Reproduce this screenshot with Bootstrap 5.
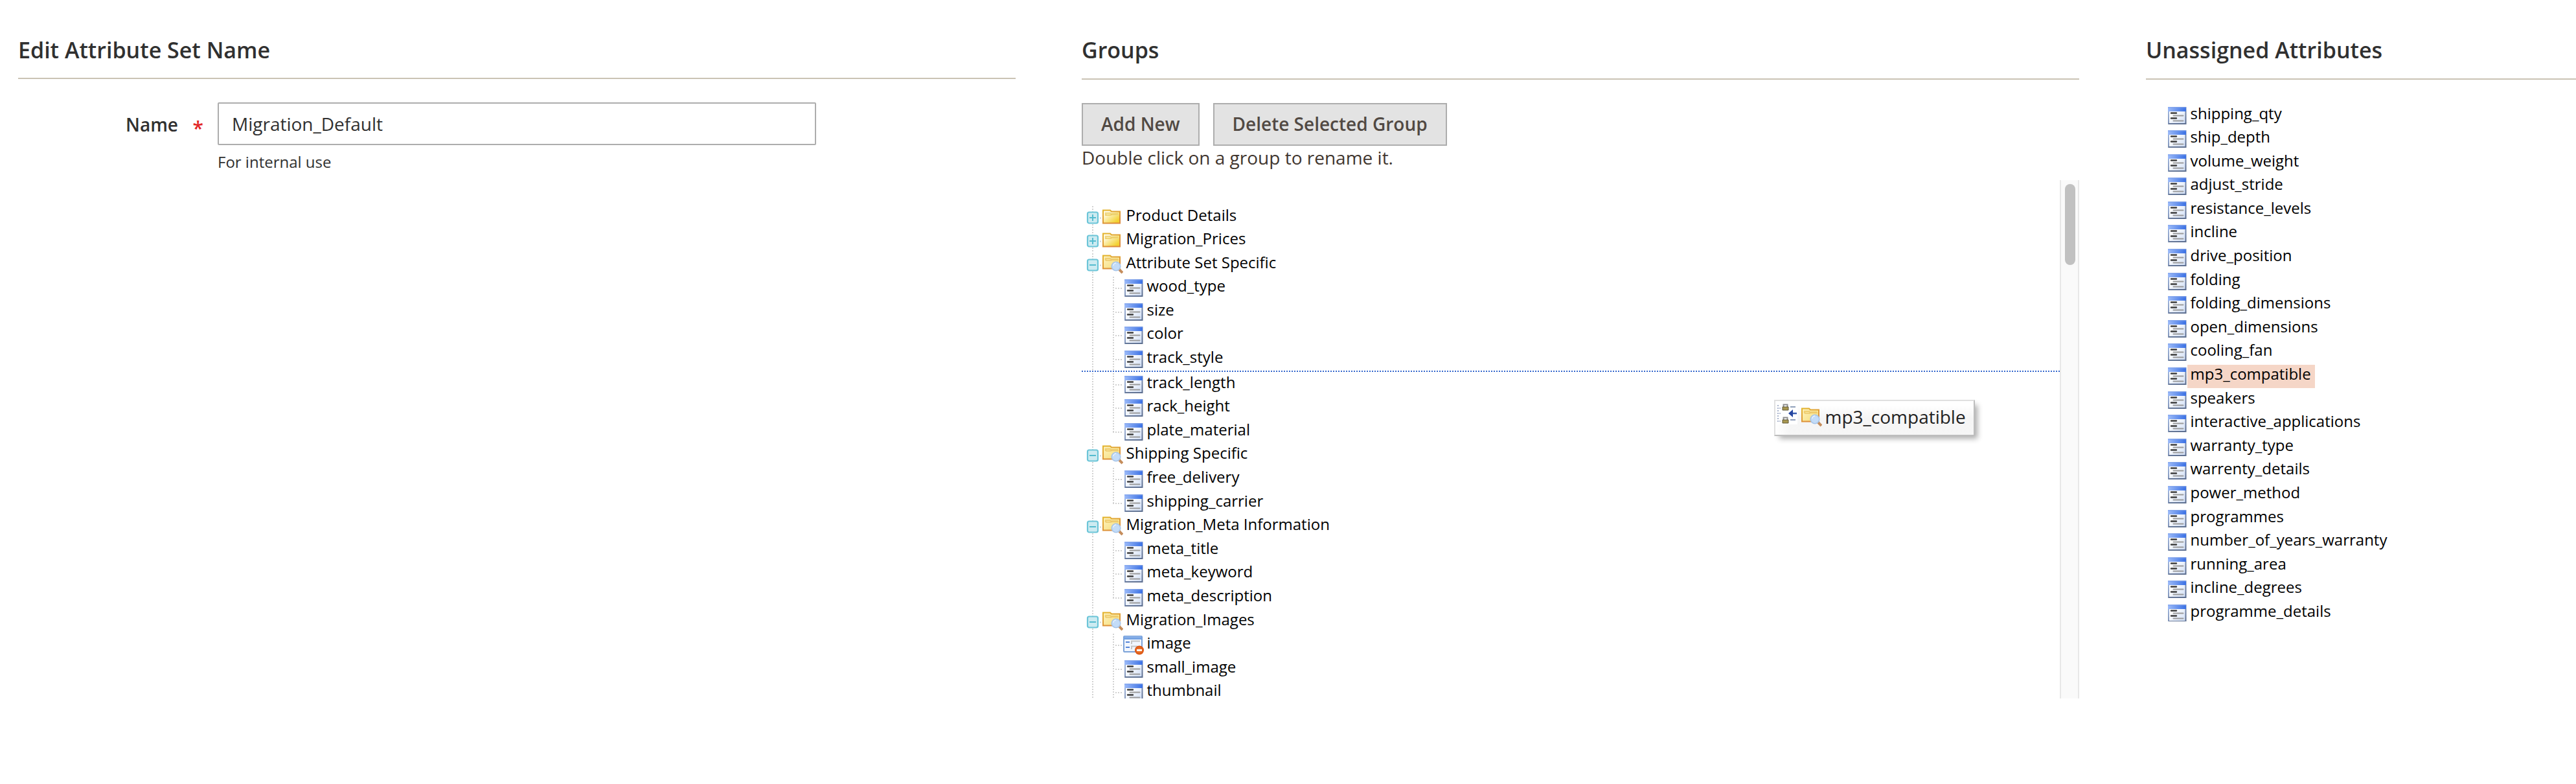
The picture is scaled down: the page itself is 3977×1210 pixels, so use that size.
<!DOCTYPE html>
<html lang="en">
<head>
<meta charset="utf-8">
<title>Edit Attribute Set</title>
<link href="https://cdn.jsdelivr.net/npm/bootstrap@5.3.0/dist/css/bootstrap.min.css" rel="stylesheet">
<style>
body{font-family:"Open Sans","Noto Sans",sans-serif;font-size:28px;line-height:38px;color:#41362f;background:#fff;overflow:hidden}
.page-row{gap:102px;padding-left:28px;height:1210px}
.panel{width:1540px}
.panel-free{flex:1 1 0;min-width:0;margin-left:1px}
.panel-title{font-size:34px;line-height:46px;font-weight:600;color:#303030;padding-top:54px;height:123px;border-bottom:2px solid #cac3b4}
.first .panel-title{height:122px}
.name-row{padding-top:36px;color:#303030}
.name-label{width:308px;font-weight:600;padding:1px 22px 0 0;line-height:66px}
.req{color:#e22626;margin-left:22px;width:17px;display:inline-block;line-height:1;font-size:30px;vertical-align:-6px}
.name-input{width:924px;height:66px;border:2px solid #adadad;border-radius:2px;padding:0 20px;font-size:28px;color:#303030}
.note{font-size:24px;line-height:32px;padding-top:10px}
.btns{padding-top:36px;gap:21px}
.btn-grey{--bs-btn-padding-y:0;--bs-btn-padding-x:28px;--bs-btn-font-size:28px;--bs-btn-font-weight:600;--bs-btn-line-height:60px;--bs-btn-border-radius:0;--bs-btn-border-width:2px;--bs-btn-color:#514943;--bs-btn-bg:#e3e3e3;--bs-btn-border-color:#adadad;height:66px;padding-bottom:2px}
.hint{line-height:36px;height:53px}
.tree-pane{height:800px}
.tree-list{padding-top:39.5px;overflow:hidden;font-size:24px;line-height:32px;color:#000}
.free-list{padding:37.5px 0 0 32px;height:836px}
.tn{height:36.6px}
.ln,.el,.en,.tg{width:32px;height:36px;flex:none}
.ln{background:linear-gradient(#d2d2d2 50%,transparent 50%) 16px 0/2px 4px repeat-y}
.el{background:linear-gradient(#d2d2d2 50%,transparent 50%) 16px 0/2px 4px repeat-y,repeating-linear-gradient(90deg,#d2d2d2 0 2px,transparent 2px 4px) 20px 17px/10px 2px no-repeat}
.en{background:repeating-linear-gradient(#d2d2d2 0 2px,transparent 2px 4px) 16px 0/2px 18px no-repeat,repeating-linear-gradient(90deg,#d2d2d2 0 2px,transparent 2px 4px) 16px 17px/14px 2px no-repeat}
.tg{background:linear-gradient(#d2d2d2 50%,transparent 50%) 16px 0/2px 4px repeat-y}
.tg svg{width:32px;height:36px;display:block}
.ic{width:32px;height:32px;flex:none;margin-top:2px}
.nm{padding:0 6px 0 4.5px;height:36px;line-height:28px;white-space:nowrap}
.picked{background:#f5d6c7}
.drop-below{height:34.6px;margin-bottom:2px;border-bottom:2px dotted #36c;box-sizing:content-box}
.track{width:30px;background:#fafafa;border:solid #e8e8e8;border-width:0 2px;padding:6px 4px 0 6px}
.thumb{width:16px;height:125px;border-radius:8px;background:#c1c1c1}
.ghost{left:2739px;top:617px;width:310px;height:56px;border:2px solid;border-color:#e0e0e0 #bdbdbd #bdbdbd #e0e0e0;background:linear-gradient(90deg,#fff 0,rgba(255,255,255,0) 22px),linear-gradient(#fff 6px,#f5f5f5 26px,#f6f6f6);box-shadow:6px 6px 8px -2px rgba(0,0,0,.32);padding:4px 0 0 2px;color:#222}
.ghost .fold{margin:6px 0 0 6px}
.ghost .cap{padding-left:4.5px;line-height:38px;padding-top:1px}
</style>
<script src="https://cdn.jsdelivr.net/npm/bootstrap@5.3.0/dist/js/bootstrap.bundle.min.js"></script>
</head>
<body>
<svg width="0" height="0" class="position-absolute">
<defs>
<linearGradient id="gBar"><stop offset="0" stop-color="#9dbbf8"/><stop offset="1" stop-color="#3a70e4"/></linearGradient>
<linearGradient id="gBody" x2="1" y2="1"><stop offset=".3" stop-color="#fff"/><stop offset="1" stop-color="#cddcf5"/></linearGradient>
<linearGradient id="gEdge" x2="1" y2="1"><stop offset="0" stop-color="#a9bfe6"/><stop offset="1" stop-color="#5a6b8c"/></linearGradient>
<linearGradient id="gFold" x2="1" y2="1"><stop offset=".2" stop-color="#fffbe6"/><stop offset=".85" stop-color="#f3d12f"/></linearGradient>
<linearGradient id="gRim" x2=".6" y2="1"><stop offset="0" stop-color="#e3b52c"/><stop offset="1" stop-color="#dc8a3c"/></linearGradient>
<linearGradient id="gOpen" x2="1" y2="1"><stop offset="0" stop-color="#fdf3c4"/><stop offset="1" stop-color="#f6dc73"/></linearGradient>
<radialGradient id="gOff"><stop offset="0" stop-color="#f58a3c"/><stop offset="1" stop-color="#d9500f"/></radialGradient>
</defs>
<symbol id="leaf" viewBox="0 0 32 32">
<rect x="3" y="3" width="26.5" height="25" fill="url(#gBody)" stroke="url(#gEdge)" stroke-width="2"/>
<rect x="2" y="2.5" width="28" height="6.5" fill="url(#gBar)"/><path d="M2 3h28" stroke="#7b9ff0"/>
<path d="M3 28h27" stroke="#5f7191" stroke-width="1.6"/>
<path d="M7 11.5h8M7 19.5h8" stroke="#3c3c3c" stroke-width="2.4" stroke-linecap="round"/>
<path d="M10.500 15.500h15M10.500 23.500h15" stroke="#9b9b9b" stroke-width="2" stroke-linecap="round"/>
</symbol>
<symbol id="folder" viewBox="0 0 32 32">
<path d="M1 4.500h11l2 2h13v18H1z" fill="url(#gFold)" stroke="url(#gRim)" stroke-width="2"/>
<path d="M5 13v-4h7l2 2h11" fill="none" stroke="#efd680" stroke-width="2.500"/><path d="M5 12h8l2-2h9" fill="none" stroke="#eccb5c" stroke-width="1.500"/>
</symbol>
<symbol id="find" viewBox="0 0 32 32">
<path d="M1 1.500h11l2 2h13v18H1z" fill="url(#gOpen)" stroke="url(#gRim)" stroke-width="2"/>
<path d="M5 9V6h7l2 2h11" fill="none" stroke="#f0cf72" stroke-width="2.500"/><path d="M5 9h8l2-2h9" fill="none" stroke="#ebc76a" stroke-width="1.500"/>
<path d="M26 23l5 5" stroke="#c58d5c" stroke-width="4"/>
<circle cx="21" cy="18" r="6.800" fill="#c3dcf8" stroke="#a6c4e8" stroke-width="1.500"/><path d="M17 17a4 4 0 0 1 4-4" stroke="#e8f3ff" stroke-width="1.500" fill="none"/>
</symbol>
<symbol id="locked" viewBox="0 0 32 32">
<rect x="1" y="2" width="28" height="24" rx="1" fill="#f1f6fd" stroke="#7ba2d8" stroke-width="2"/>
<path d="M1 4.500h28" stroke="#76a3e2" stroke-width="5"/><path d="M2 3h26" stroke="#a4c4f0"/>
<path d="M4 11h6M4 19h6" stroke="#5584d8" stroke-width="2.200"/>
<path d="M13 14V9.500h13M13 22v-4.500h9" fill="none" stroke="#c4c4c4" stroke-width="2"/>
<circle cx="25" cy="23.500" r="7" fill="url(#gOff)"/><path d="M21 23.500h8" stroke="#fff" stroke-width="2.800"/>
</symbol>
<symbol id="minus" viewBox="0 0 32 36">
<path d="M28 18.500h2" stroke="#d2d2d2" stroke-width="2"/>
<rect x="9" y="9.500" width="16" height="17" rx="2.500" fill="#cdebf1" stroke="#6cc5d8" stroke-width="2.200"/>
<path d="M12 18h10" stroke="#55bccf" stroke-width="2"/>
</symbol>
<symbol id="plus" viewBox="0 0 32 36">
<use href="#minus"/><path d="M17 13v10" stroke="#55bccf" stroke-width="2"/>
</symbol>
<symbol id="drop" viewBox="0 0 32 32">
<rect width="32" height="32" fill="#fff"/>
<path d="M2 2v28" stroke="#a9b4cc" stroke-width="2" stroke-dasharray="2"/><path d="M4 7h4M4 15h4M4 27h4" stroke="#b8c2d6" stroke-width="2" stroke-dasharray="2"/>
<path d="M10.500 5V1.500h6V5M10.500 25v-3.500h6V25" fill="none" stroke="#8d8d8d" stroke-width="2"/>
<path d="M9 5h9v5H9zM9 25h9v5H9z" fill="#a8974f" stroke="#5c5638"/>
<path d="M21 5h8M21 25h8" stroke="#8f9fba" stroke-width="2"/>
<path d="M22 15h9" stroke="#3b5fb0" stroke-width="2.500"/><path d="M18 15l7-6v12z" fill="#2546a0"/>
</symbol>
</svg>

<main class="d-flex page-row">
<section class="panel first flex-shrink-0">
<h2 class="panel-title mb-0">Edit Attribute Set Name</h2>
<div class="d-flex name-row">
<label class="name-label text-end" for="setName">Name<span class="req">*</span></label>
<div><input id="setName" class="form-control name-input" type="text" value="Migration_Default"><div class="note">For internal use</div></div>
</div>
</section>

<section class="panel flex-shrink-0">
<h2 class="panel-title mb-0">Groups</h2>
<div class="d-flex btns"><button class="btn btn-grey" type="button">Add New</button><button class="btn btn-grey" type="button">Delete Selected Group</button></div>
<div class="hint">Double click on a group to rename it.</div>
<div class="d-flex tree-pane">
<ul class="list-unstyled mb-0 flex-grow-1 tree-list">
<li class="d-flex tn"><span class="tg"><svg><use href="#plus"/></svg></span><svg class="ic"><use href="#folder"/></svg><span class="nm">Product Details</span></li>
<li class="d-flex tn"><span class="tg"><svg><use href="#plus"/></svg></span><svg class="ic"><use href="#folder"/></svg><span class="nm">Migration_Prices</span></li>
<li class="d-flex tn"><span class="tg"><svg><use href="#minus"/></svg></span><svg class="ic"><use href="#find"/></svg><span class="nm">Attribute Set Specific</span></li>
<li class="d-flex tn"><span class="ln"></span><span class="el"></span><svg class="ic"><use href="#leaf"/></svg><span class="nm">wood_type</span></li>
<li class="d-flex tn"><span class="ln"></span><span class="el"></span><svg class="ic"><use href="#leaf"/></svg><span class="nm">size</span></li>
<li class="d-flex tn"><span class="ln"></span><span class="el"></span><svg class="ic"><use href="#leaf"/></svg><span class="nm">color</span></li>
<li class="d-flex tn drop-below"><span class="ln"></span><span class="el"></span><svg class="ic"><use href="#leaf"/></svg><span class="nm">track_style</span></li>
<li class="d-flex tn"><span class="ln"></span><span class="el"></span><svg class="ic"><use href="#leaf"/></svg><span class="nm">track_length</span></li>
<li class="d-flex tn"><span class="ln"></span><span class="el"></span><svg class="ic"><use href="#leaf"/></svg><span class="nm">rack_height</span></li>
<li class="d-flex tn"><span class="ln"></span><span class="en"></span><svg class="ic"><use href="#leaf"/></svg><span class="nm">plate_material</span></li>
<li class="d-flex tn"><span class="tg"><svg><use href="#minus"/></svg></span><svg class="ic"><use href="#find"/></svg><span class="nm">Shipping Specific</span></li>
<li class="d-flex tn"><span class="ln"></span><span class="el"></span><svg class="ic"><use href="#leaf"/></svg><span class="nm">free_delivery</span></li>
<li class="d-flex tn"><span class="ln"></span><span class="en"></span><svg class="ic"><use href="#leaf"/></svg><span class="nm">shipping_carrier</span></li>
<li class="d-flex tn"><span class="tg"><svg><use href="#minus"/></svg></span><svg class="ic"><use href="#find"/></svg><span class="nm">Migration_Meta Information</span></li>
<li class="d-flex tn"><span class="ln"></span><span class="el"></span><svg class="ic"><use href="#leaf"/></svg><span class="nm">meta_title</span></li>
<li class="d-flex tn"><span class="ln"></span><span class="el"></span><svg class="ic"><use href="#leaf"/></svg><span class="nm">meta_keyword</span></li>
<li class="d-flex tn"><span class="ln"></span><span class="en"></span><svg class="ic"><use href="#leaf"/></svg><span class="nm">meta_description</span></li>
<li class="d-flex tn"><span class="tg"><svg><use href="#minus"/></svg></span><svg class="ic"><use href="#find"/></svg><span class="nm">Migration_Images</span></li>
<li class="d-flex tn"><span class="ln"></span><span class="el"></span><svg class="ic"><use href="#locked"/></svg><span class="nm">image</span></li>
<li class="d-flex tn"><span class="ln"></span><span class="el"></span><svg class="ic"><use href="#leaf"/></svg><span class="nm">small_image</span></li>
<li class="d-flex tn"><span class="ln"></span><span class="el"></span><svg class="ic"><use href="#leaf"/></svg><span class="nm">thumbnail</span></li>
</ul>
<div class="track flex-shrink-0"><div class="thumb"></div></div>
</div>
</section>

<section class="panel-free">
<h2 class="panel-title mb-0">Unassigned Attributes</h2>
<ul class="list-unstyled mb-0 tree-list free-list">
<li class="d-flex tn"><svg class="ic"><use href="#leaf"/></svg><span class="nm">shipping_qty</span></li>
<li class="d-flex tn"><svg class="ic"><use href="#leaf"/></svg><span class="nm">ship_depth</span></li>
<li class="d-flex tn"><svg class="ic"><use href="#leaf"/></svg><span class="nm">volume_weight</span></li>
<li class="d-flex tn"><svg class="ic"><use href="#leaf"/></svg><span class="nm">adjust_stride</span></li>
<li class="d-flex tn"><svg class="ic"><use href="#leaf"/></svg><span class="nm">resistance_levels</span></li>
<li class="d-flex tn"><svg class="ic"><use href="#leaf"/></svg><span class="nm">incline</span></li>
<li class="d-flex tn"><svg class="ic"><use href="#leaf"/></svg><span class="nm">drive_position</span></li>
<li class="d-flex tn"><svg class="ic"><use href="#leaf"/></svg><span class="nm">folding</span></li>
<li class="d-flex tn"><svg class="ic"><use href="#leaf"/></svg><span class="nm">folding_dimensions</span></li>
<li class="d-flex tn"><svg class="ic"><use href="#leaf"/></svg><span class="nm">open_dimensions</span></li>
<li class="d-flex tn"><svg class="ic"><use href="#leaf"/></svg><span class="nm">cooling_fan</span></li>
<li class="d-flex tn"><svg class="ic"><use href="#leaf"/></svg><span class="nm picked">mp3_compatible</span></li>
<li class="d-flex tn"><svg class="ic"><use href="#leaf"/></svg><span class="nm">speakers</span></li>
<li class="d-flex tn"><svg class="ic"><use href="#leaf"/></svg><span class="nm">interactive_applications</span></li>
<li class="d-flex tn"><svg class="ic"><use href="#leaf"/></svg><span class="nm">warranty_type</span></li>
<li class="d-flex tn"><svg class="ic"><use href="#leaf"/></svg><span class="nm">warrenty_details</span></li>
<li class="d-flex tn"><svg class="ic"><use href="#leaf"/></svg><span class="nm">power_method</span></li>
<li class="d-flex tn"><svg class="ic"><use href="#leaf"/></svg><span class="nm">programmes</span></li>
<li class="d-flex tn"><svg class="ic"><use href="#leaf"/></svg><span class="nm">number_of_years_warranty</span></li>
<li class="d-flex tn"><svg class="ic"><use href="#leaf"/></svg><span class="nm">running_area</span></li>
<li class="d-flex tn"><svg class="ic"><use href="#leaf"/></svg><span class="nm">incline_degrees</span></li>
<li class="d-flex tn"><svg class="ic"><use href="#leaf"/></svg><span class="nm">programme_details</span></li>
</ul>
</section>
</main>

<div class="ghost position-absolute d-flex">
<svg class="ic mt-0"><use href="#drop"/></svg><svg class="ic fold"><use href="#find"/></svg><span class="cap">mp3_compatible</span>
</div>
</body>
</html>
